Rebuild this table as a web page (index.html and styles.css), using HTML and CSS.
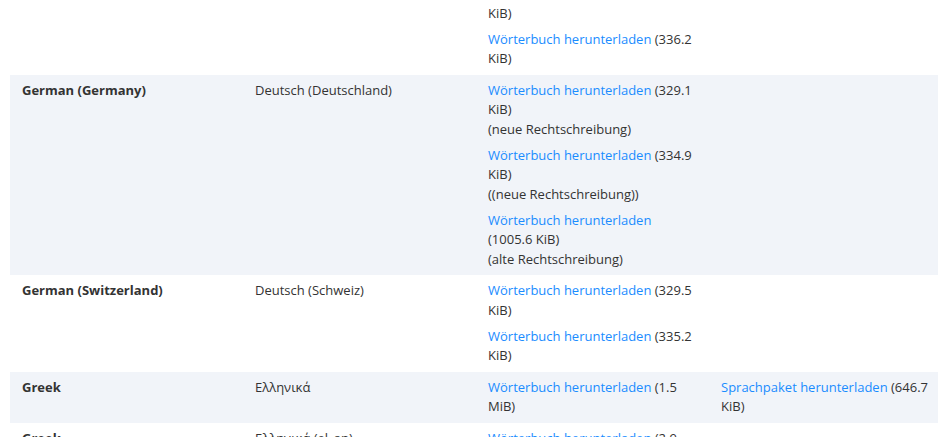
FILE: index.html
```html
<!DOCTYPE html>
<html lang="de">
<head>
<meta charset="utf-8">
<title>Wörterbücher</title>
<link rel="stylesheet" href="styles.css">
</head>
<body>
<div class="page">
<table class="dicts">
  <tbody>
    <tr>
      <td class="lang">German (Austria)</td>
      <td>Deutsch (Österreich)</td>
      <td>
        <p><a href="#">Wörterbuch herunterladen</a> (329.4 KiB)</p>
        <p><a href="#">Wörterbuch herunterladen</a> (336.2 KiB)</p>
      </td>
      <td></td>
    </tr>
    <tr class="alt">
      <td class="lang">German (Germany)</td>
      <td>Deutsch (Deutschland)</td>
      <td>
        <p><a href="#">Wörterbuch herunterladen</a> (329.1 KiB)<br>(neue Rechtschreibung)</p>
        <p><a href="#">Wörterbuch herunterladen</a> (334.9 KiB)<br>((neue Rechtschreibung))</p>
        <p><a href="#">Wörterbuch herunterladen</a> (1005.6 KiB)<br>(alte Rechtschreibung)</p>
      </td>
      <td></td>
    </tr>
    <tr>
      <td class="lang">German (Switzerland)</td>
      <td>Deutsch (Schweiz)</td>
      <td>
        <p><a href="#">Wörterbuch herunterladen</a> (329.5 KiB)</p>
        <p><a href="#">Wörterbuch herunterladen</a> (335.2 KiB)</p>
      </td>
      <td></td>
    </tr>
    <tr class="alt">
      <td class="lang">Greek</td>
      <td>Ελληνικά</td>
      <td>
        <p><a href="#">Wörterbuch herunterladen</a> (1.5 MiB)</p>
      </td>
      <td>
        <p><a href="#">Sprachpaket herunterladen</a> (646.7 KiB)</p>
      </td>
    </tr>
    <tr>
      <td class="lang">Greek</td>
      <td>Ελληνικά (el_an)</td>
      <td>
        <p><a href="#">Wörterbuch herunterladen</a> (2.9 MiB)</p>
      </td>
      <td></td>
    </tr>
  </tbody>
</table>
</div>
</body>
</html>
```

FILE: styles.css
```css
html, body {
  margin: 0;
  padding: 0;
  background: #ffffff;
}

body {
  font-family: "Open Sans", "Noto Sans", sans-serif;
  font-size: 13px;
  line-height: 19.5px;
  color: #333333;
  overflow: hidden;
}

.page {
  padding-left: 10px;
  margin-top: -22px;
}

.dicts {
  width: 932px;
  border-collapse: collapse;
  table-layout: fixed;
}

.dicts td {
  width: 25%;
  padding: 6px 12px;
  vertical-align: top;
}

.dicts tr.alt td {
  background: #f1f4f9;
}

.dicts .lang {
  font-weight: 700;
}

.dicts p {
  margin: 0 0 6.5px;
}

.dicts p:last-child {
  margin-bottom: 0;
}

.dicts a {
  color: #1a8cff;
  text-decoration: none;
}
```
